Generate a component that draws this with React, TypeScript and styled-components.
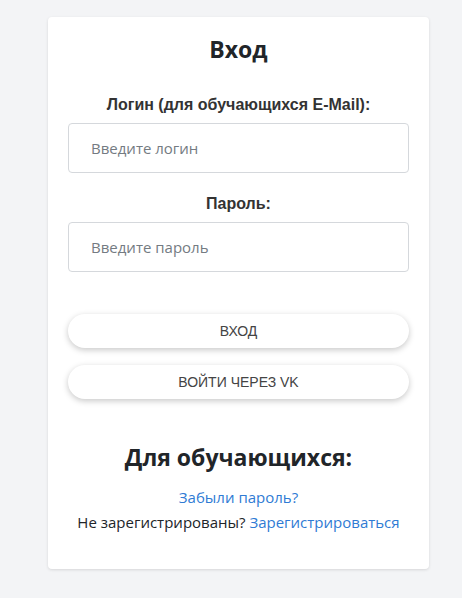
import React from "react";
import styled, { createGlobalStyle } from "styled-components";

const GlobalStyle = createGlobalStyle`
  body {
    margin: 0;
    background: #f3f4f6;
    font-family: "Open Sans", "Noto Sans", sans-serif;
    color: #212529;
  }
`;

const Page = styled.div`
  padding: 17px 0 28px 48px;
`;

const Card = styled.div`
  width: 381px;
  box-sizing: border-box;
  background: #fff;
  border-radius: 4px;
  box-shadow: 0 1px 3px rgba(0, 0, 0, 0.12);
  padding: 16px 20px 34px;
  display: flex;
  flex-direction: column;
  align-items: center;
`;

const Title = styled.h2`
  margin: 0 0 31px;
  font-size: 23px;
  font-weight: 700;
  line-height: 32px;
`;

const Field = styled.div`
  width: 100%;
  display: flex;
  flex-direction: column;
  align-items: center;
  margin-bottom: 22px;
`;

const Label = styled.label`
  font-family: "Liberation Sans", Arial, sans-serif;
  font-weight: 700;
  font-size: 16px;
  line-height: 18px;
  color: #333;
  margin-bottom: 9px;
`;

const Input = styled.input`
  width: 100%;
  box-sizing: border-box;
  height: 50px;
  border: 1px solid #d5d8dc;
  border-radius: 4px;
  padding: 0 22px;
  font-family: "Open Sans", sans-serif;
  font-size: 15px;
  &::placeholder {
    color: #747b82;
  }
`;

const Buttons = styled.div`
  width: 100%;
  display: flex;
  flex-direction: column;
  gap: 17px;
  margin-top: 20px;
`;

const PillButton = styled.button`
  width: 100%;
  height: 34px;
  border: none;
  border-radius: 17px;
  background: #fff;
  box-shadow: 0 2px 6px rgba(0, 0, 0, 0.22);
  font-family: "Liberation Sans", Arial, sans-serif;
  font-size: 14px;
  color: #444;
  text-transform: uppercase;
  cursor: pointer;
`;

const SubTitle = styled.h2`
  margin: 42px 0 12px;
  font-size: 23px;
  font-weight: 700;
  line-height: 32px;
`;

const Line = styled.p`
  margin: 0;
  font-size: 15px;
  line-height: 25px;
`;

const Link = styled.a`
  color: #2f7bd4;
  text-decoration: none;
`;

export default function App() {
  return (
    <Page>
      <GlobalStyle />
      <Card>
        <Title>Вход</Title>
        <Field>
          <Label>Логин (для обучающихся E-Mail):</Label>
          <Input placeholder="Введите логин" />
        </Field>
        <Field>
          <Label>Пароль:</Label>
          <Input type="password" placeholder="Введите пароль" />
        </Field>
        <Buttons>
          <PillButton>Вход</PillButton>
          <PillButton>Войти через VK</PillButton>
        </Buttons>
        <SubTitle>Для обучающихся:</SubTitle>
        <Line>
          <Link href="#">Забыли пароль?</Link>
        </Line>
        <Line>
          Не зарегистрированы? <Link href="#">Зарегистрироваться</Link>
        </Line>
      </Card>
    </Page>
  );
}
